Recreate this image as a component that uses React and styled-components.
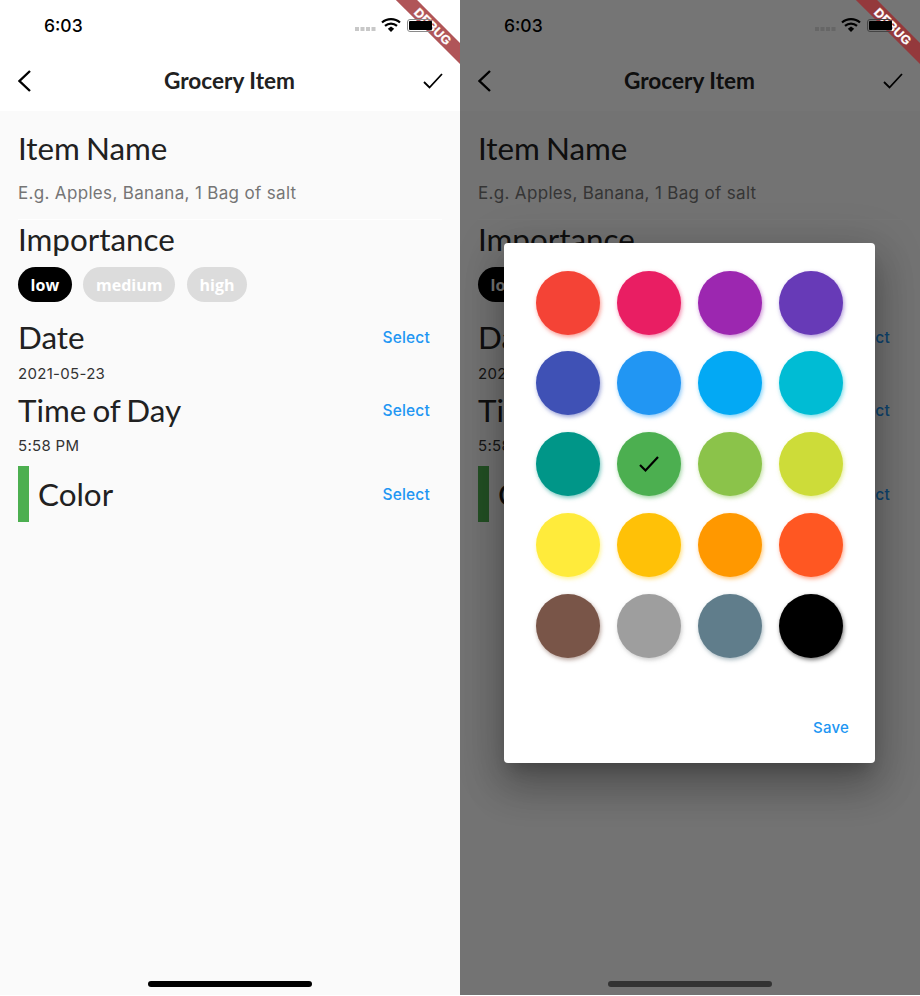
import React from 'react'
import styled, { createGlobalStyle } from 'styled-components'

const GlobalStyle = createGlobalStyle`
  * {
    margin: 0;
    padding: 0;
    box-sizing: border-box;
  }
  body {
    background: #fff;
    font-family: "Inter", "Liberation Sans", sans-serif;
  }
`

const Page = styled.div`
  display: flex;
  width: 920px;
  height: 996px;
`

const Phone = styled.div`
  position: relative;
  display: flex;
  flex-direction: column;
  width: 460px;
  height: 995px;
  overflow: hidden;
  background: #fafafa;
`

const AppBar = styled.header`
  display: flex;
  flex-direction: column;
  height: 111px;
  background: #fff;
`

const StatusBar = styled.div`
  position: relative;
  z-index: 2;
  display: flex;
  align-items: center;
  height: 50px;
  padding: 0 28px 0 44px;
`

const Clock = styled.span`
  flex: 1;
  font-size: 17.5px;
  font-weight: 500;
  color: #000;
`

const NavBar = styled.div`
  display: flex;
  align-items: center;
  justify-content: space-between;
  height: 61px;
  padding: 0 17px 0 18px;
`

const NavSlot = styled.div`
  display: flex;
  justify-content: ${p => (p.$end ? 'flex-end' : 'flex-start')};
  width: ${p => (p.$end ? 26 : 24)}px;
`

const Title = styled.h1`
  font-family: "Lato", sans-serif;
  font-size: 22.6px;
  font-weight: 700;
  color: #212121;
`

const Body = styled.main`
  display: flex;
  flex-direction: column;
  padding: 19px 30px 0 18px;
`

const Heading = styled.h2`
  padding-bottom: ${p => (p.$flush ? 0 : 2)}px;
  font-family: "Lato", sans-serif;
  font-size: 31.4px;
  font-weight: 400;
  line-height: 36px;
  word-spacing: -2px;
  color: #212121;
`

const Placeholder = styled.div`
  margin-top: 14px;
  font-size: 17px;
  line-height: 22px;
  letter-spacing: 0.33px;
  color: #757575;
`

const Divider = styled.div`
  height: 1px;
  margin: 15px -12px 1px 0;
  background: #fff;
`

const Chips = styled.div`
  display: flex;
  gap: 11.5px;
  margin: 8px 0 17px;
`

const Chip = styled.span`
  display: flex;
  align-items: center;
  justify-content: center;
  width: ${p => p.$width}px;
  height: 35px;
  border-radius: 18px;
  font-family: "Open Sans", sans-serif;
  font-size: 16px;
  font-weight: 700;
  color: #fff;
  background: ${p => (p.$active ? '#000' : '#dcdcdc')};
`

const Row = styled.div`
  display: flex;
  align-items: center;
  justify-content: space-between;
  margin-top: ${p => p.$top || 0}px;
`

const Select = styled.button`
  padding-bottom: ${p => (p.$flush ? 0 : 2)}px;
  border: none;
  background: none;
  font-family: "Inter", sans-serif;
  font-size: 15.5px;
  font-weight: 500;
  letter-spacing: 0.2px;
  color: #2196f3;
`

const Value = styled.div`
  margin-top: ${p => p.$top}px;
  font-size: 15px;
  line-height: 18px;
  letter-spacing: 0.3px;
  color: #333;
`

const ColorLabel = styled.div`
  display: flex;
  align-items: center;
  gap: 9px;
`

const ColorBar = styled.div`
  width: 11px;
  height: 56px;
  background: #4caf50;
`

const HomeIndicator = styled.div`
  position: absolute;
  z-index: 2;
  left: 148px;
  bottom: 8px;
  width: 164px;
  height: 6px;
  border-radius: 3px;
  background: ${p => (p.$dim ? '#333' : '#000')};
`

const Scrim = styled.div`
  position: absolute;
  inset: 0;
  background: rgba(0, 0, 0, 0.54);
`

const Dialog = styled.div`
  position: absolute;
  top: 243px;
  left: 44px;
  display: flex;
  flex-direction: column;
  width: 371px;
  height: 520px;
  padding: 27.7px 26px 0 32.2px;
  border-radius: 4px;
  background: #fff;
  box-shadow: 0 24px 38px 3px rgba(0, 0, 0, 0.2), 0 9px 46px 8px rgba(0, 0, 0, 0.14), 0 11px 15px -7px rgba(0, 0, 0, 0.2);
`

const Swatches = styled.div`
  display: grid;
  grid-template-columns: repeat(4, 64px);
  grid-auto-rows: 64px;
  gap: 16.8px;
`

const Swatch = styled.div`
  display: flex;
  align-items: center;
  justify-content: center;
  border-radius: 50%;
  background: ${p => p.$color};
  box-shadow: 1px 2px 4px ${p => p.$color}88;
`

const Save = styled.button`
  align-self: flex-end;
  margin-top: 61px;
  border: none;
  background: none;
  font-family: "Inter", sans-serif;
  font-size: 15px;
  font-weight: 500;
  line-height: 18px;
  letter-spacing: 0.2px;
  color: #2196f3;
`

const Banner = styled.div`
  position: absolute;
  z-index: 1;
  top: 18.5px;
  left: 373px;
  display: flex;
  align-items: center;
  justify-content: center;
  width: 120px;
  height: 15px;
  transform: rotate(45deg);
  font-family: "Liberation Sans", sans-serif;
  font-size: 12.5px;
  font-weight: 700;
  letter-spacing: 0.3px;
  -webkit-text-stroke: 0.3px #fff;
  color: #fff;
  background: rgba(156, 42, 46, 0.8);
`

const colors = [
  '#f44336', '#e91e63', '#9c27b0', '#673ab7',
  '#3f51b5', '#2196f3', '#03a9f4', '#00bcd4',
  '#009688', '#4caf50', '#8bc34a', '#cddc39',
  '#ffeb3b', '#ffc107', '#ff9800', '#ff5722',
  '#795548', '#9e9e9e', '#607d8b', '#000000',
]

const StatusIcons = ({ dim }) => (
  <svg width="78" height="16" viewBox="0 0 78 16" fill="none">
    <g fill={dim ? '#666' : '#c8c8c8'}>
      <rect x="1" y="10" width="4" height="4" />
      <rect x="6.5" y="10" width="4" height="4" />
      <rect x="12" y="10" width="4" height="4" />
      <rect x="17.5" y="10" width="4" height="4" />
    </g>
    <path d="M28 5.5C33 1 41 1 46 5.5" stroke="#000" strokeWidth="2.2" />
    <path d="M31 8.8C34.5 5.8 39.5 5.8 43 8.8" stroke="#000" strokeWidth="2.2" />
    <path d="M33.8 11.8L37 9.6L40.2 11.8L37 15Z" fill="#000" />
    <rect x="53.5" y="2.5" width="24" height="12" rx="2.5" stroke={dim ? '#444' : '#8a8a8a'} />
    <rect x="55" y="4" width="23" height="9" rx="1" fill="#000" />
  </svg>
)

const BackIcon = () => (
  <svg width="14" height="22" viewBox="0 0 14 22" fill="none">
    <path d="M12 1L1.5 11L12 21" stroke="#000" strokeWidth="2.4" />
  </svg>
)

const CheckIcon = ({ weight = 1.8 }) => (
  <svg width="20" height="20" viewBox="0 0 20 20" fill="none">
    <path d="M1 11L6.5 16.5L19 3" stroke="#000" strokeWidth={weight} />
  </svg>
)

const Screen = ({ dim }) => (
  <>
    <AppBar>
      <StatusBar>
        <Clock>6:03</Clock>
        <StatusIcons dim={dim} />
      </StatusBar>
      <NavBar>
        <NavSlot><BackIcon /></NavSlot>
        <Title>Grocery Item</Title>
        <NavSlot $end><CheckIcon /></NavSlot>
      </NavBar>
    </AppBar>
    <Body>
      <Heading>Item Name</Heading>
      <Placeholder>E.g. Apples, Banana, 1 Bag of salt</Placeholder>
      <Divider />
      <Heading>Importance</Heading>
      <Chips>
        <Chip $active $width={53.7}>low</Chip>
        <Chip $width={92}>medium</Chip>
        <Chip $width={60.6}>high</Chip>
      </Chips>
      <Row>
        <Heading>Date</Heading>
        <Select>Select</Select>
      </Row>
      <Value $top={8}>2021-05-23</Value>
      <Row $top={9}>
        <Heading>Time of Day</Heading>
        <Select>Select</Select>
      </Row>
      <Value $top={7}>5:58 PM</Value>
      <Row $top={11}>
        <ColorLabel>
          <ColorBar />
          <Heading $flush>Color</Heading>
        </ColorLabel>
        <Select $flush>Select</Select>
      </Row>
    </Body>
    <HomeIndicator $dim={dim} />
  </>
)

export default function App() {
  return (
    <Page>
      <GlobalStyle />
      <Phone>
        <Screen />
        <Banner>DEBUG</Banner>
      </Phone>
      <Phone>
        <Screen dim />
        <Scrim />
        <Dialog>
          <Swatches>
            {colors.map(color => (
              <Swatch key={color} $color={color}>
                {color === '#4caf50' && <CheckIcon weight={2.2} />}
              </Swatch>
            ))}
          </Swatches>
          <Save>Save</Save>
        </Dialog>
        <Banner>DEBUG</Banner>
      </Phone>
    </Page>
  )
}
